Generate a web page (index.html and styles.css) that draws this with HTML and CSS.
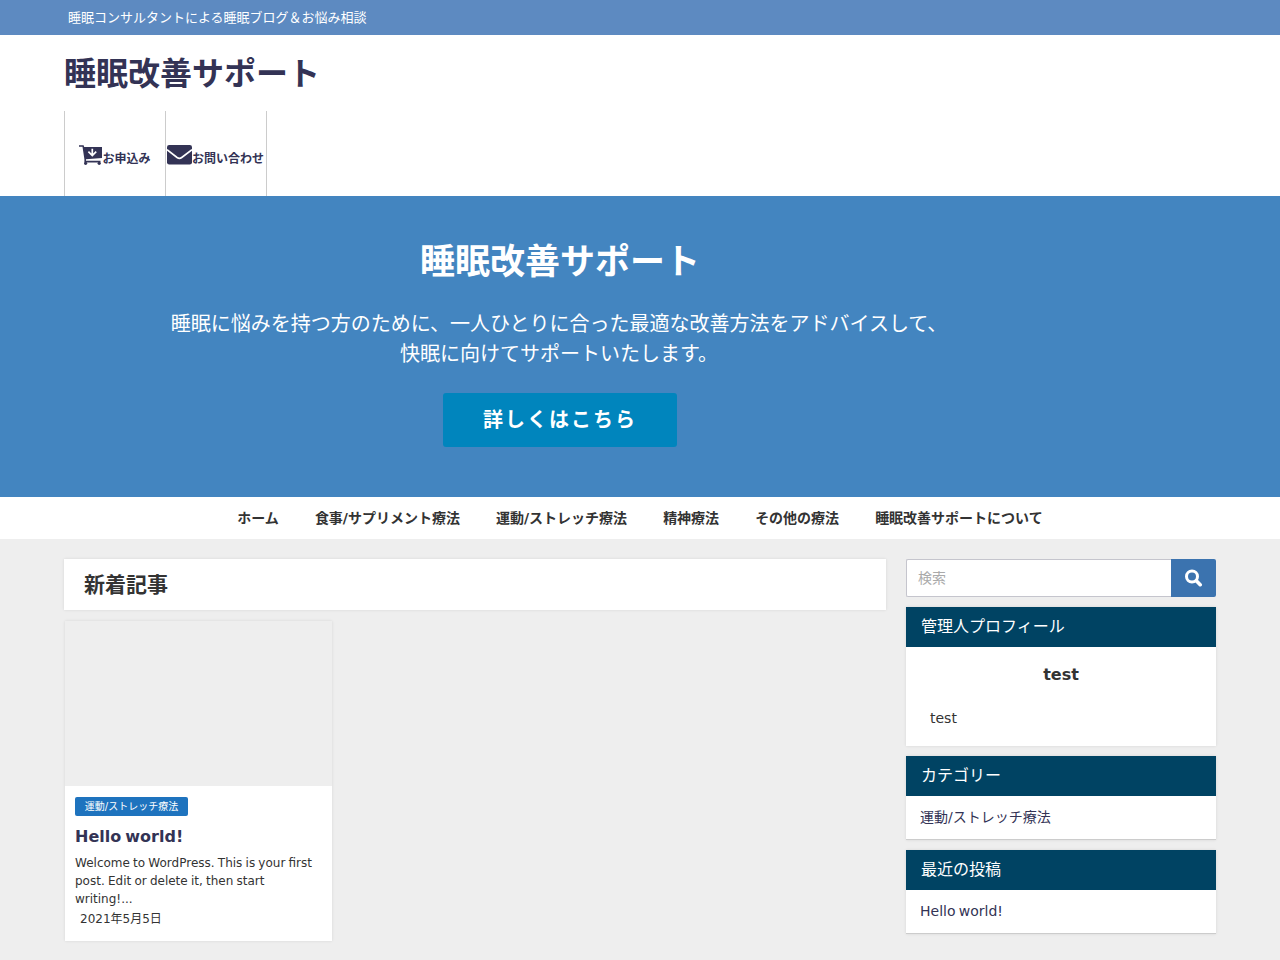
FILE: index.html
```html
<!DOCTYPE html>
<html lang="ja">
<head>
<meta charset="utf-8">
<title>睡眠改善サポート</title>
<link rel="stylesheet" href="styles.css">
</head>
<body>
<div class="topbar">睡眠コンサルタントによる睡眠ブログ＆お悩み相談</div>
<header class="header">
  <a class="logo">睡眠改善サポート</a>
  <div class="contacts">
    <a class="contact">
      <svg class="icon-cart" width="23" height="21" viewBox="0 0 23 21"><path fill="currentColor" d="M0 .2h4.6l.6 1.9H23v10.8L7 14.2v1.6h14.5v1.6H5.4v-3.2L3.5 1.8H0z"/><circle cx="6.6" cy="18.3" r="1.6" fill="currentColor"/><circle cx="20.2" cy="18.3" r="1.6" fill="currentColor"/><path d="M13.3 3.7v6.6M9.4 6.7l3.9 3.8 3.9-3.8" fill="none" stroke="#fff" stroke-width="1.7"/></svg><span>お申込み</span>
    </a>
    <a class="contact">
      <svg class="icon-mail" width="25" height="20" viewBox="0 0 26 20" preserveAspectRatio="none"><rect width="26" height="19.6" rx="2.3" fill="currentColor"/><path d="M0 4.7l10.5 7.8q2.4 1.7 4.8 0L26 4.7" fill="none" stroke="#fff" stroke-width="1.7"/></svg><span>お問い合わせ</span>
    </a>
  </div>
</header>
<section class="hero">
  <div class="hero-inner">
    <h2 class="hero-title">睡眠改善サポート</h2>
    <p class="hero-text">睡眠に悩みを持つ方のために、一人ひとりに合った最適な改善方法をアドバイスして、<br>快眠に向けてサポートいたします。</p>
    <a class="hero-button">詳しくはこちら</a>
  </div>
</section>
<nav class="nav">
  <a>ホーム</a><a>食事/サプリメント療法</a><a>運動/ストレッチ療法</a><a>精神療法</a><a>その他の療法</a><a>睡眠改善サポートについて</a>
</nav>
<div class="layout">
  <main class="main">
    <h1 class="heading">新着記事</h1>
    <article class="card">
      <div class="thumb"></div>
      <div class="card-body">
        <span class="tag">運動/ストレッチ療法</span>
        <h2 class="card-title">Hello world!</h2>
        <p class="excerpt">Welcome to WordPress. This is your first post. Edit or delete it, then start writing!...</p>
        <div class="date">2021年5月5日</div>
      </div>
    </article>
  </main>
  <aside class="sidebar">
    <form class="search">
      <input class="search-input" type="text" placeholder="検索">
      <button class="search-button" type="button" aria-label="検索"><svg width="18" height="18" viewBox="0 0 18 18" fill="none" stroke="currentColor"><circle cx="7" cy="7.5" r="5.5" stroke-width="3"/><path d="M11.3 11.8l3.9 3.9" stroke-width="3.6" stroke-linecap="round"/></svg></button>
    </form>
    <section class="widget">
      <h3 class="widget-title">管理人プロフィール</h3>
      <div class="profile">
        <p class="profile-name">test</p>
        <p class="profile-text">test</p>
      </div>
    </section>
    <section class="widget">
      <h3 class="widget-title">カテゴリー</h3>
      <a class="widget-link">運動/ストレッチ療法</a>
    </section>
    <section class="widget">
      <h3 class="widget-title">最近の投稿</h3>
      <a class="widget-link">Hello world!</a>
    </section>
  </aside>
</div>
</body>
</html>
```
FILE: styles.css
```css
* { box-sizing: border-box; }
body {
  margin: 0;
  height: 960px;
  overflow: hidden;
  background: #eee;
  color: #333;
  font-family: "DejaVu Sans", "Noto Sans CJK JP", sans-serif;
}
h1, h2, h3, p { margin: 0; }
.topbar {
  height: 35px;
  padding-left: 68px;
  background: #5d8ac1;
  color: #fff;
  font-size: 13px;
  line-height: 35px;
}
.header {
  height: 161px;
  padding: 0 64px;
  background: #fff;
  color: #335;
}
.logo {
  display: block;
  height: 76px;
  font-size: 32px;
  font-weight: 700;
  line-height: 78px;
}
.contacts { display: flex; height: 85px; }
.contact {
  display: flex;
  justify-content: center;
  width: 101px;
  padding-top: 34px;
  border-left: 1px solid #ccc;
  font-size: 12px;
  font-weight: 700;
  line-height: 29px;
  white-space: nowrap;
}
.contact:last-child {
  justify-content: flex-start;
  width: 102px;
  padding-left: 1px;
  border-right: 1px solid #ccc;
}
.icon-cart, .icon-mail { flex: none; }
.hero {
  height: 301px;
  padding: 38px 160px 0 0;
  background: #4385c0;
  color: #fff;
  text-align: center;
}
.hero-title { font-size: 35px; line-height: 56px; }
.hero-text {
  margin: 19px 2px 0 0;
  font-size: 20px;
  line-height: 30px;
}
.hero-button {
  display: inline-block;
  height: 54px;
  margin-top: 24px;
  padding: 0 40px;
  border-radius: 3px;
  background: #0085bd;
  font-size: 20px;
  font-weight: 700;
  line-height: 54px;
  letter-spacing: 2px;
}
.nav {
  display: flex;
  justify-content: center;
  gap: 36px;
  height: 42px;
  background: #fff;
  font-size: 14px;
  font-weight: 700;
  line-height: 42px;
}
.layout { display: flex; gap: 20px; padding: 20px 64px 0; }
.main { width: 822px; }
.heading {
  height: 51px;
  padding-left: 20px;
  background: #fff;
  box-shadow: 0 0 3px rgba(0, 0, 0, .1);
  font-size: 21px;
  line-height: 52px;
}
.card {
  width: 267px;
  height: 320px;
  margin: 11px 0 0 1px;
  background: #fff;
  box-shadow: 0 0 3px rgba(0, 0, 0, .1);
}
.thumb { height: 165px; background: #eee; }
.card-body { padding: 11px 10px 0; }
.tag {
  display: block;
  width: 113px;
  height: 19px;
  border-radius: 2px;
  background: #1e73be;
  color: #fff;
  font-size: 10px;
  line-height: 19px;
  text-align: center;
  white-space: nowrap;
}
.card-title {
  margin-top: 7px;
  color: #335;
  font-size: 16px;
  line-height: 27px;
  word-spacing: -1.5px;
}
.excerpt {
  margin-top: 4px;
  font-size: 12px;
  line-height: 18px;
  word-spacing: -.6px;
}
.date { margin-top: 1px; padding-left: 5px; font-size: 12px; line-height: 21px; }
.sidebar { width: 310px; }
.search { display: flex; height: 38px; }
.search-input {
  flex: 1;
  min-width: 0;
  padding: 0 11px;
  border: 1px solid #c5c5cd;
  border-right: 0;
  border-radius: 2px 0 0 2px;
  background: #fff;
  font: 14px "DejaVu Sans", "Noto Sans CJK JP", sans-serif;
}
.search-input::placeholder { color: #aaa; }
.search-button {
  display: flex;
  align-items: center;
  justify-content: center;
  width: 45px;
  padding: 0;
  border: 0;
  border-radius: 0 2px 2px 0;
  background: #3b73af;
  color: #fff;
}
.widget {
  margin-top: 10px;
  background: #fff;
  box-shadow: 0 0 3px rgba(0, 0, 0, .1);
}
.widget-title {
  height: 40px;
  padding-left: 15px;
  background: #004363;
  color: #fff;
  font-size: 16px;
  font-weight: 400;
  line-height: 40px;
}
.profile { height: 99px; padding-top: 14px; }
.profile-name {
  font-size: 16px;
  font-weight: 700;
  line-height: 27px;
  text-align: center;
}
.profile-text { margin-top: 18px; padding-left: 24px; font-size: 14px; line-height: 24px; }
.widget-link {
  display: block;
  height: 44px;
  padding-left: 14px;
  border-bottom: 1px solid #ccc;
  color: #335;
  font-size: 14px;
  line-height: 43px;
  word-spacing: -1.2px;
}
```
